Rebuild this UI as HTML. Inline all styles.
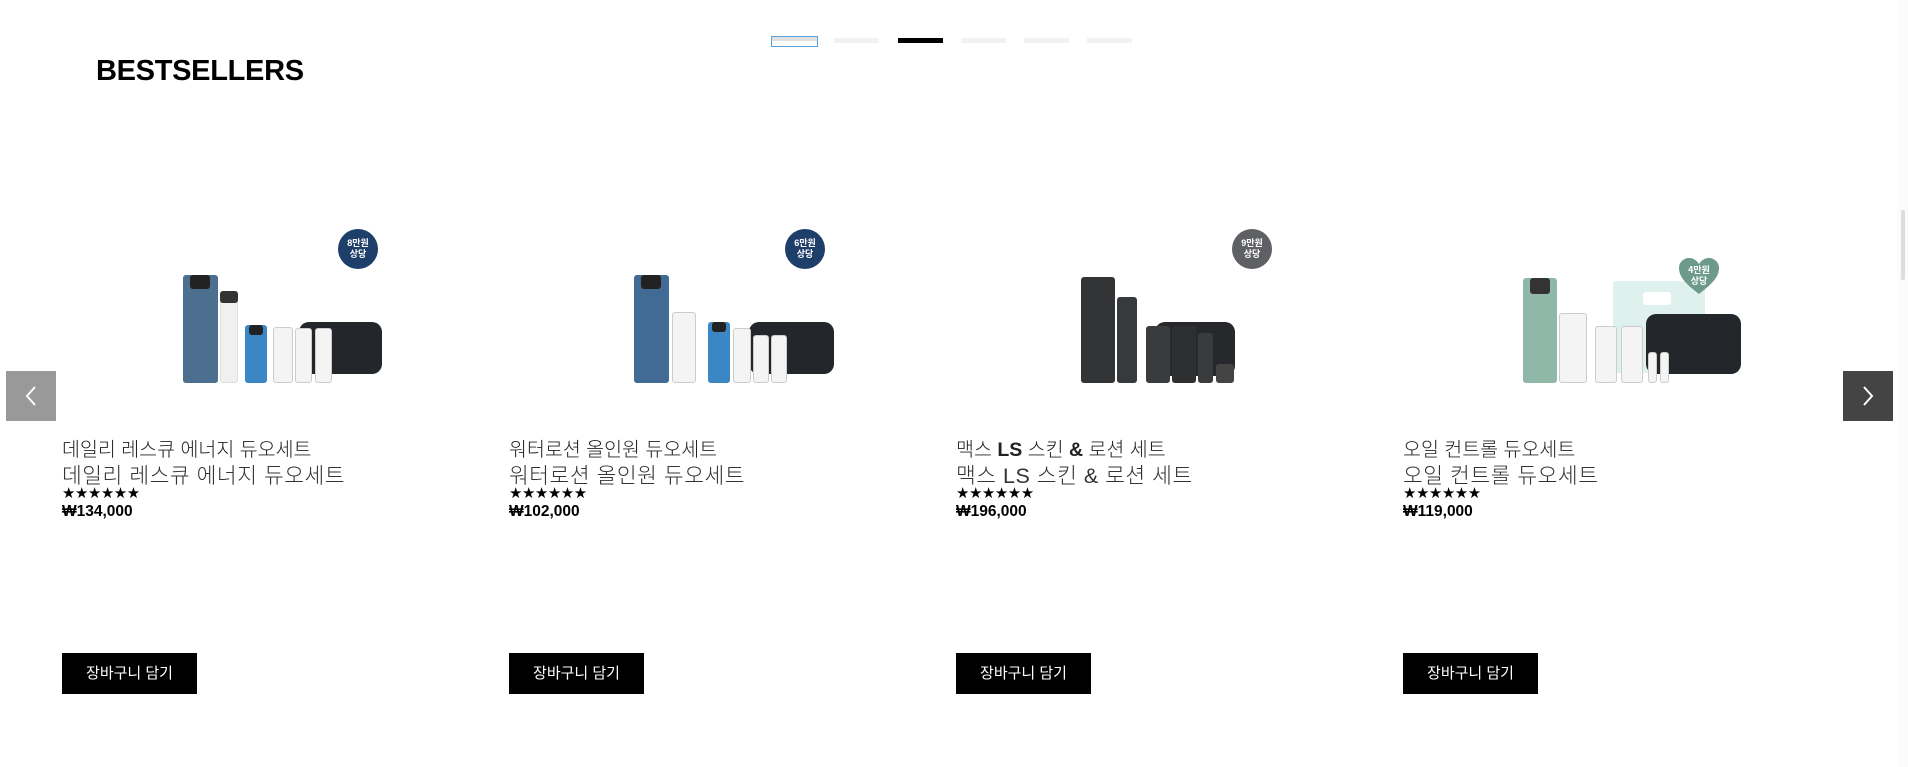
<!DOCTYPE html>
<html><head><meta charset="utf-8">
<style>
*{margin:0;padding:0;box-sizing:border-box}
body{width:1908px;height:767px;background:#fff;position:relative;overflow:hidden;font-family:"Liberation Sans","Noto Sans CJK KR",sans-serif;color:#111}
.a{position:absolute}
.dot{position:absolute;top:38px;width:45px;height:5px;background:#f2f2f2}
h1{position:absolute;left:96px;top:55px;font-size:29px;font-weight:bold;letter-spacing:-0.3px;color:#000}
.card{position:absolute;top:0;width:447px;height:767px}
.t1{position:absolute;left:0;top:433px;font-size:19.5px;color:#222;white-space:nowrap;font-weight:300}
.t1 b{font-weight:bold}
.t2{position:absolute;left:0;top:459px;font-size:21.5px;color:#333;white-space:nowrap;font-weight:300;letter-spacing:0.5px}
.st{position:absolute;left:0;top:484px;font-size:15px;letter-spacing:-0.5px;color:#000;font-family:"DejaVu Sans",sans-serif}
.pr{position:absolute;left:0;top:503px;font-size:15.5px;font-weight:bold;color:#000}
.btn{position:absolute;left:0;top:653px;width:135px;height:41px;background:#000;color:#fff;font-size:15px;line-height:41px;text-align:center}
.badge{position:absolute;left:276px;top:229px;width:40px;height:40px;border-radius:50%;color:#fff;font-size:9px;line-height:11px;text-align:center;padding-top:9px;font-weight:bold}
.p{position:absolute;border-radius:3px}
</style></head><body>
<div class="a" style="left:771px;top:36px;width:47px;height:11px;border:1px solid #5aa0d8;background:#fff"></div>
<div class="a" style="left:772px;top:37px;width:45px;height:4px;background:#e0e0e0"></div>
<div class="dot" style="left:834px"></div>
<div class="dot" style="left:898px;background:#000"></div>
<div class="dot" style="left:961px"></div>
<div class="dot" style="left:1024px"></div>
<div class="dot" style="left:1087px"></div>
<h1>BESTSELLERS</h1>

<div class="card" style="left:62px">
 <div class="p" style="left:237px;top:322px;width:83px;height:52px;background:#23262b;border-radius:10px"></div>
 <div class="p" style="left:121px;top:275px;width:35px;height:108px;background:#4d6f8f"></div>
 <div class="p" style="left:128px;top:275px;width:20px;height:14px;background:#222"></div>
 <div class="p" style="left:158px;top:291px;width:18px;height:92px;background:#f0f0f0;border:1px solid #ddd"></div>
 <div class="p" style="left:158px;top:291px;width:18px;height:12px;background:#333"></div>
 <div class="p" style="left:183px;top:325px;width:22px;height:58px;background:#3b86c4"></div>
 <div class="p" style="left:187px;top:325px;width:14px;height:10px;background:#222"></div>
 <div class="p" style="left:211px;top:327px;width:20px;height:56px;background:#f4f4f4;border:1px solid #ccc"></div>
 <div class="p" style="left:233px;top:328px;width:17px;height:55px;background:#f4f4f4;border:1px solid #ccc"></div>
 <div class="p" style="left:253px;top:328px;width:17px;height:55px;background:#f4f4f4;border:1px solid #ccc"></div>
 <div class="badge" style="background:#1f3f6b">8만원<br>상당</div>
 <div class="t1">데일리 레스큐 에너지 듀오세트</div>
 <div class="t2">데일리 레스큐 에너지 듀오세트</div>
 <div class="st">★★★★★★</div>
 <div class="pr">₩134,000</div>
 <div class="btn">장바구니 담기</div>
</div>

<div class="card" style="left:509px">
 <div class="p" style="left:240px;top:322px;width:85px;height:52px;background:#23262b;border-radius:10px"></div>
 <div class="p" style="left:125px;top:275px;width:35px;height:108px;background:#416b94"></div>
 <div class="p" style="left:132px;top:275px;width:20px;height:14px;background:#222"></div>
 <div class="p" style="left:163px;top:312px;width:24px;height:71px;background:#f4f4f4;border:1px solid #ccc"></div>
 <div class="p" style="left:199px;top:322px;width:22px;height:61px;background:#3b86c4"></div>
 <div class="p" style="left:203px;top:322px;width:14px;height:10px;background:#222"></div>
 <div class="p" style="left:224px;top:328px;width:18px;height:55px;background:#f4f4f4;border:1px solid #ccc"></div>
 <div class="p" style="left:244px;top:335px;width:16px;height:48px;background:#f4f4f4;border:1px solid #ccc"></div>
 <div class="p" style="left:262px;top:335px;width:16px;height:48px;background:#f4f4f4;border:1px solid #ccc"></div>
 <div class="badge" style="background:#1f3f6b">6만원<br>상당</div>
 <div class="t1">워터로션 올인원 듀오세트</div>
 <div class="t2">워터로션 올인원 듀오세트</div>
 <div class="st">★★★★★★</div>
 <div class="pr">₩102,000</div>
 <div class="btn">장바구니 담기</div>
</div>

<div class="card" style="left:956px">
 <div class="p" style="left:199px;top:322px;width:80px;height:54px;background:#26282b;border-radius:10px"></div>
 <div class="p" style="left:125px;top:277px;width:34px;height:106px;background:#333436"></div>
 <div class="p" style="left:161px;top:297px;width:20px;height:86px;background:#38393b"></div>
 <div class="p" style="left:190px;top:326px;width:24px;height:57px;background:#3a3b3d"></div>
 <div class="p" style="left:216px;top:326px;width:24px;height:57px;background:#2e2f31"></div>
 <div class="p" style="left:242px;top:333px;width:15px;height:50px;background:#3a3b3d"></div>
 <div class="p" style="left:260px;top:364px;width:18px;height:19px;background:#444"></div>
 <div class="badge" style="background:#5f6064">9만원<br>상당</div>
 <div class="t1">맥스 <b>LS</b> 스킨 <b>&amp;</b> 로션 세트</div>
 <div class="t2">맥스 LS 스킨 &amp; 로션 세트</div>
 <div class="st">★★★★★★</div>
 <div class="pr">₩196,000</div>
 <div class="btn">장바구니 담기</div>
</div>

<div class="card" style="left:1403px">
 <div class="p" style="left:210px;top:281px;width:92px;height:92px;background:#dff1ec"></div>
 <div class="p" style="left:240px;top:292px;width:28px;height:13px;background:#fff"></div>
 <div class="p" style="left:243px;top:314px;width:95px;height:60px;background:#23262b;border-radius:10px"></div>
 <div class="p" style="left:120px;top:278px;width:34px;height:105px;background:#8fb8a9"></div>
 <div class="p" style="left:127px;top:278px;width:20px;height:16px;background:#333"></div>
 <div class="p" style="left:156px;top:313px;width:28px;height:70px;background:#f4f4f4;border:1px solid #ccc"></div>
 <div class="p" style="left:192px;top:326px;width:22px;height:57px;background:#f4f4f4;border:1px solid #ccc"></div>
 <div class="p" style="left:218px;top:326px;width:22px;height:57px;background:#f4f4f4;border:1px solid #ccc"></div>
 <div class="p" style="left:245px;top:352px;width:9px;height:31px;background:#f4f4f4;border:1px solid #ccc"></div>
 <div class="p" style="left:257px;top:352px;width:9px;height:31px;background:#f4f4f4;border:1px solid #ccc"></div>
 <svg class="a" style="left:275px;top:257px" width="42" height="38" viewBox="0 0 42 38"><path d="M21 37 C8 27 1 20 1 11 C1 5 6 1 11 1 C16 1 19 4 21 7 C23 4 26 1 31 1 C36 1 41 5 41 11 C41 20 34 27 21 37Z" fill="#6e9a8c"/><text x="21" y="16" font-size="9" fill="#fff" text-anchor="middle" font-family="Noto Sans CJK KR,sans-serif" font-weight="bold">4만원</text><text x="21" y="27" font-size="9" fill="#fff" text-anchor="middle" font-family="Noto Sans CJK KR,sans-serif" font-weight="bold">상당</text></svg>
 <div class="t1">오일 컨트롤 듀오세트</div>
 <div class="t2">오일 컨트롤 듀오세트</div>
 <div class="st">★★★★★★</div>
 <div class="pr">₩119,000</div>
 <div class="btn">장바구니 담기</div>
</div>

<div class="a" style="left:6px;top:371px;width:50px;height:50px;background:#999">
 <svg width="50" height="50"><path d="M29 16 L21 25 L29 34" stroke="#fff" stroke-width="2" fill="none"/></svg>
</div>
<div class="a" style="left:1843px;top:371px;width:50px;height:50px;background:#444">
 <svg width="50" height="50"><path d="M21 16 L29 25 L21 34" stroke="#fff" stroke-width="2" fill="none"/></svg>
</div>
<div class="a" style="left:1898px;top:0;width:10px;height:767px;background:#fbfbfb"></div>
<div class="a" style="left:1901px;top:210px;width:4px;height:70px;background:#ddd;border-radius:2px"></div>
</body></html>
